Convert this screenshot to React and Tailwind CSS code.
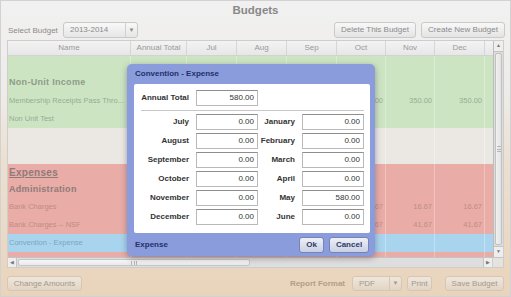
import React from 'react';

const COLS = [
    { key: 'name', w: 'w-[123px]', label: 'Name' },
    { key: 'total', w: 'w-[56px]', label: 'Annual Total' },
    { key: 'jul', w: 'w-[50px]', label: 'Jul' },
    { key: 'aug', w: 'w-[50px]', label: 'Aug' },
    { key: 'sep', w: 'w-[50px]', label: 'Sep' },
    { key: 'oct', w: 'w-[49px]', label: 'Oct' },
    { key: 'nov', w: 'w-[49px]', label: 'Nov' },
    { key: 'dec', w: 'w-[50px]', label: 'Dec' },
];

// only the months right of the dialog are visible
const monthly = (v) => ({ oct: v, nov: v, dec: v });

const ROWS = [
    { bg: 'bg-[#cde4c2]', line: 'border-[#dcebd4]', h: 'h-[18px]' },
    { bg: 'bg-[#cde4c2]', line: 'border-[#dcebd4]', h: 'h-[18px]', name: 'Non-Unit Income', kind: 'group', color: 'text-[#8d9c8a]' },
    { bg: 'bg-[#cde4c2]', line: 'border-[#dcebd4]', h: 'h-[18px]', name: 'Membership Receipts Pass Thro...', color: 'text-[#9aab95]', ...monthly('350.00') },
    { bg: 'bg-[#cde4c2]', line: 'border-[#dcebd4]', h: 'h-[18px]', name: 'Non Unit Test', color: 'text-[#9aab95]' },
    { bg: 'bg-[#ebe8e4]', line: 'border-[#f2f0ee]', h: 'h-[18px]' },
    { bg: 'bg-[#ebe8e4]', line: 'border-[#f2f0ee]', h: 'h-[18px]' },
    { bg: 'bg-[#e9aca6]', line: 'border-[#efc3be]', h: 'h-[17px]', name: 'Expenses', kind: 'section', color: 'text-[#8f7b79]' },
    { bg: 'bg-[#e9aca6]', line: 'border-[#efc3be]', h: 'h-[17px]', name: 'Administration', kind: 'group', color: 'text-[#8f7b79]' },
    { bg: 'bg-[#e9aca6]', line: 'border-[#efc3be]', h: 'h-[18px]', name: 'Bank Charges', color: 'text-[#c08c87]', ...monthly('16.67') },
    { bg: 'bg-[#e9aca6]', line: 'border-[#efc3be]', h: 'h-[18px]', name: 'Bank Charges -- NSF', color: 'text-[#c08c87]', ...monthly('41.67') },
    { bg: 'bg-[#a9d4ee]', line: 'border-[#c3e1f3]', h: 'h-[18px]', name: 'Convention - Expense', color: 'text-[#7ba6c2]' },
    { bg: 'bg-[#e9aca6]', line: 'border-[#efc3be]', h: 'h-[6px]' },
];

const LEFT = [['July', '0.00'], ['August', '0.00'], ['September', '0.00'], ['October', '0.00'], ['November', '0.00'], ['December', '0.00']];
const RIGHT = [['January', '0.00'], ['February', '0.00'], ['March', '0.00'], ['April', '0.00'], ['May', '580.00'], ['June', '0.00']];

function GrayButton({ children, className = '' }) {
    return (
        <div className={`h-[16px] flex items-center justify-center rounded-[3px] border border-[#c9c9c9] bg-[linear-gradient(to_bottom,#f8f8f8,#e4e4e4)] text-[8px] text-[#8a8a8a] ${className}`}>
            {children}
        </div>
    );
}

function TanButton({ children, className = '' }) {
    return (
        <div className={`h-[15px] flex items-center justify-center rounded-[3px] border border-[#d6c7b5] bg-[linear-gradient(to_bottom,#efe6dc,#e2d5c5)] text-[8px] text-[#a5998b] ${className}`}>
            {children}
        </div>
    );
}

function Field({ label, value, labelW }) {
    return (
        <div className="flex items-center">
            <div className={`${labelW} text-right font-bold text-[8px] text-[#333]`}>{label}</div>
            <div className="ml-[7px] w-[62px] h-[16px] border border-[#b9b9b9] border-t-[#8e8e8e] bg-white text-right pr-[3px] text-[8px] leading-[14px] text-[#333]">
                {value}
            </div>
        </div>
    );
}

export default function App() {
    return (
        <div className="w-[511px] h-[297px] relative overflow-hidden border border-[#d2d2d2] bg-[linear-gradient(to_bottom,#f1f1f1_0%,#eeece9_30%,#ecdfd0_55%,#e9d4bb_100%)] font-['Liberation_Sans',Arial,sans-serif] select-none">
            {/* Title */}
            <div className="h-[19px] pt-[1px] flex items-center justify-center text-[11.5px] font-bold text-[#888]">Budgets</div>

            {/* Top controls */}
            <div className="h-[20px] flex items-center pl-[7px] pr-[5px]">
                <div className="text-[8px] text-[#8a8a8a] w-[55px] pt-[1px]">Select Budget</div>
                <div className="w-[75px] h-[16px] flex items-center rounded-[3px] border border-[#c9c9c9] bg-[linear-gradient(to_bottom,#f8f8f8,#e6e6e6)]">
                    <div className="flex-1 pl-[6px] text-[8px] text-[#8a8a8a]">2013-2014</div>
                    <div className="w-[12px] h-full border-l border-[#d0d0d0] flex items-center justify-center text-[6px] text-[#8a8a8a]">▼</div>
                </div>
                <div className="flex-1" />
                <GrayButton className="w-[82px]">Delete This Budget</GrayButton>
                <GrayButton className="w-[84px] ml-[5px]">Create New Budget</GrayButton>
            </div>

            {/* Grid */}
            <div className="mx-[6px] h-[228px] border border-[#cdcdcd] flex flex-col bg-[#ebe8e4]">
                <div className="flex flex-1 min-h-0">
                    <div className="w-[485px] flex flex-col overflow-hidden">
                        <div className="h-[15px] flex shrink-0 border-b border-[#d2d2d2] bg-[linear-gradient(to_bottom,#f3f3f3,#e7e7e7)]">
                            {COLS.map(c => (
                                <div key={c.key} className={`${c.w} shrink-0 border-r border-[#d6d6d6] flex items-center justify-center text-[8px] text-[#999]`}>{c.label}</div>
                            ))}
                            <div className="flex-1" />
                        </div>
                        {ROWS.map((r, i) => (
                            <div key={i} className={`${r.h} shrink-0 flex ${r.bg}`}>
                                {COLS.map(c => {
                                    if (c.key === 'name') {
                                        const style = r.kind === 'section'
                                            ? 'text-[10px] font-bold underline tracking-[0.3px]'
                                            : r.kind === 'group' ? 'text-[9px] font-bold tracking-[0.3px]' : 'text-[7.5px]';
                                        return (
                                            <div key={c.key} className={`${c.w} shrink-0 border-r ${r.line} flex items-center pl-[1px] whitespace-nowrap overflow-hidden ${style} ${r.color}`}>{r.name}</div>
                                        );
                                    }
                                    return (
                                        <div key={c.key} className={`${c.w} shrink-0 border-r ${r.line} flex items-center justify-end pr-[2px] text-[7.5px] ${r.color}`}>{r[c.key]}</div>
                                    );
                                })}
                                <div className="flex-1" />
                            </div>
                        ))}
                    </div>
                    {/* Vertical scrollbar */}
                    <div className="w-[10px] flex flex-col border-l border-[#bdbdbd] bg-[#dcdcdc]">
                        <div className="h-[11px] flex items-center justify-center bg-[#eeeeee] border-b border-[#c4c4c4] text-[5px] text-[#777]">▲</div>
                        <div className="flex-1 flex flex-col px-[1px] py-[1px]">
                            <div className="flex-1 rounded-[2px] border border-[#c2c2c2] bg-[linear-gradient(to_right,#f1f1f1,#e2e2e2)] flex items-center justify-center">
                                <div className="w-[4px] h-[6px] border-y border-[#b5b5b5] flex items-center"><div className="w-full h-px bg-[#b5b5b5]" /></div>
                            </div>
                        </div>
                        <div className="h-[11px] flex items-center justify-center bg-[#eeeeee] border-t border-[#c4c4c4] text-[5px] text-[#777]">▼</div>
                    </div>
                </div>
                {/* Horizontal scrollbar */}
                <div className="h-[10px] flex border-t border-[#c4c4c4] bg-[#dedede]">
                    <div className="w-[9px] flex items-center justify-center bg-[#eeeeee] border-r border-[#c4c4c4] text-[5px] text-[#777]">◀</div>
                    <div className="w-[232px] my-[1px] ml-[1px] rounded-[2px] border border-[#c6c6c6] bg-[linear-gradient(to_bottom,#f7f7f7,#e9e9e9)] flex items-center justify-center">
                        <div className="w-[6px] h-[4px] border-x border-[#b5b5b5] flex justify-center"><div className="w-px h-full bg-[#b5b5b5]" /></div>
                    </div>
                    <div className="flex-1" />
                    <div className="w-[9px] flex items-center justify-center bg-[#eeeeee] border-l border-[#c4c4c4] text-[5px] text-[#777]">▶</div>
                    <div className="w-[11px] bg-[#e6e3df] border-l border-[#cfcfcf]" />
                </div>
            </div>

            {/* Bottom controls */}
            <div className="h-[29px] pt-[2px] flex items-center pl-[6px] pr-[6px]">
                <TanButton className="w-[75px]">Change Amounts</TanButton>
                <div className="flex-1" />
                <div className="text-[8px] font-bold text-[#b09e8a] mr-[7px]">Report Format</div>
                <div className="w-[50px] h-[15px] flex items-center rounded-[3px] border border-[#d6c7b5] bg-[linear-gradient(to_bottom,#efe6dc,#e2d5c5)]">
                    <div className="flex-1 pl-[6px] text-[8px] text-[#a5998b]">PDF</div>
                    <div className="w-[12px] h-full border-l border-[#d6c7b5] flex items-center justify-center text-[6px] text-[#a5998b]">▼</div>
                </div>
                <TanButton className="w-[25px] ml-[5px]">Print</TanButton>
                <TanButton className="w-[59px] ml-[13px]">Save Budget</TanButton>
            </div>

            {/* Modal */}
            <div className="absolute left-[126px] top-[63px] w-[248px] h-[192px] rounded-[5px] bg-[#8b9cdc] shadow-[0_2px_6px_rgba(60,60,90,0.45)] flex flex-col">
                <div className="h-[20px] flex items-center pl-[8px] text-[8px] font-bold text-[#24306a]">Convention - Expense</div>
                <div className="ml-[7px] mr-[5px] h-[149px] bg-white rounded-[2px] pt-[6px] flex flex-col">
                    <Field label="Annual Total" value="580.00" labelW="w-[55px]" />
                    <div className="mt-[4px] ml-[7px] mr-[6px] h-px bg-[#c8c8c8]" />
                    <div className="mt-[3px] flex flex-col gap-[3px]">
                        {LEFT.map(([l, v], i) => (
                            <div key={l} className="flex">
                                <Field label={l} value={v} labelW="w-[55px]" />
                                <Field label={RIGHT[i][0]} value={RIGHT[i][1]} labelW="w-[37px]" />
                            </div>
                        ))}
                    </div>
                </div>
                <div className="flex-1 flex items-center pl-[8px] pr-[6px]">
                    <div className="text-[8px] font-bold text-[#24306a]">Expense</div>
                    <div className="flex-1" />
                    <div className="w-[25px] h-[16px] flex items-center justify-center rounded-[3px] border border-[#7584b8] bg-[linear-gradient(to_bottom,#eef0f6,#c9d0e3)] text-[8px] font-bold text-[#2b3a68]">Ok</div>
                    <div className="w-[40px] h-[16px] ml-[5px] flex items-center justify-center rounded-[3px] border border-[#7584b8] bg-[linear-gradient(to_bottom,#eef0f6,#c9d0e3)] text-[8px] font-bold text-[#2b3a68]">Cancel</div>
                </div>
            </div>
        </div>
    );
}
